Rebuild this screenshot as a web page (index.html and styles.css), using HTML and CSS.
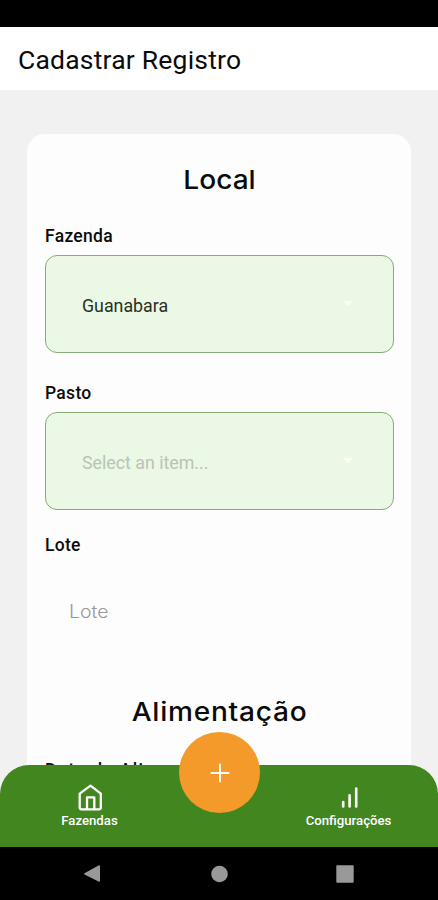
FILE: index.html
```html
<!DOCTYPE html>
<html lang="pt-BR">
<head>
<meta charset="utf-8">
<title>Cadastrar Registro</title>
<link rel="stylesheet" href="styles.css">
</head>
<body>
<div class="status-bar"></div>
<header class="header"><h1 class="header-title">Cadastrar Registro</h1></header>
<main class="content">
  <section class="card">
    <h2 class="section-title">Local</h2>
    <div class="field">
      <div class="label">Fazenda</div>
      <div class="select"><span class="value">Guanabara</span><svg class="caret" width="10" height="5" viewBox="0 0 10 5"><path d="M0 0h10L5 5z"/></svg></div>
    </div>
    <div class="field">
      <div class="label">Pasto</div>
      <div class="select"><span class="placeholder">Select an item...</span><svg class="caret" width="10" height="5" viewBox="0 0 10 5"><path d="M0 0h10L5 5z"/></svg></div>
    </div>
    <div class="field lote">
      <div class="label">Lote</div>
      <div class="input"><span class="input-text">Lote</span></div>
    </div>
    <h2 class="section-title feeding">Alimentação</h2>
    <div class="label date">Data de Alimentação</div>
  </section>
</main>
<nav class="tabs">
  <a class="tab">
    <svg width="28" height="28" viewBox="0 0 28 28" fill="none" stroke="#fff" stroke-width="2.300" stroke-linejoin="round"><path d="M3.700 10.600 14.500 2.600l10.300 8v14q0 1.800-1.800 1.800H5.500q-1.800 0-1.800-1.800z"/><path d="M11 26.200V14.400h7.300v11.800"/></svg>
    <span class="tab-text">Fazendas</span>
  </a>
  <div class="fab"><svg width="20" height="20" viewBox="0 0 20 20" stroke="#fff" stroke-width="2" stroke-linecap="round"><path d="M10 1.500v17M1.500 10h17"/></svg></div>
  <a class="tab">
    <svg width="28" height="28" viewBox="0 0 28 28" stroke="#fff" stroke-width="2.600" stroke-linecap="round"><path d="M8.200 19v4.500M14.600 12.200v11.300M21.200 5.500v18"/></svg>
    <span class="tab-text">Configurações</span>
  </a>
</nav>
<footer class="system-nav">
  <svg width="20" height="20" viewBox="0 0 20 20"><path d="M2.500 9.200 16.500 1.400q1.500-.6 1.500.8v14.600q0 1.500-1.500.8L2.500 10.400q-1-.6 0-1.200z"/></svg>
  <svg width="20" height="20" viewBox="0 0 20 20"><circle cx="10.500" cy="10" r="8.300"/></svg>
  <svg width="20" height="20" viewBox="0 0 20 20"><rect x="1.300" y="1.300" width="17.400" height="17.400" rx="1"/></svg>
</footer>
</body>
</html>
```
FILE: styles.css
```css
* { box-sizing: border-box; }
body { margin: 0; height: 900px; display: flex; flex-direction: column; overflow: hidden; background: #f1f1f1; font-family: Roboto, sans-serif; color: #0b0b0b; }
h1, h2 { margin: 0; }
.status-bar { height: 27px; flex: none; background: #000; }
.header { height: 63px; flex: none; display: flex; align-items: center; padding: 3px 18px 0; background: #fff; }
.header-title { font-size: 26.500px; font-weight: 400; line-height: 32px; letter-spacing: .2px; white-space: nowrap; }
.content { height: 675px; flex: none; overflow: hidden; padding: 44px 27px 0; }
.card { height: 760px; border-radius: 18px; background: #fdfdfd; padding: 28px 17px 0 18px; }
.section-title { height: 34px; line-height: 35px; font-family: Inter, sans-serif; font-size: 26px; font-weight: 500; text-align: center; transform: scaleX(1.08); }
.field { margin-top: 28px; }
.label { height: 22px; line-height: 24px; font-size: 17.500px; font-weight: 500; letter-spacing: .3px; white-space: nowrap; }
.select { height: 98px; margin-top: 9px; border: 1px solid #86ac74; border-radius: 12px; background: #ebf8e5; display: flex; align-items: center; justify-content: space-between; padding: 2px 40px 0 36px; font-size: 17.800px; }
.value { color: #273023; }
.placeholder { color: #b9c4b6; }
.caret { fill: #f8fff6; margin-top: -3px; }
.lote { margin-top: 23px; }
.input { height: 99px; display: flex; align-items: center; padding: 13px 24px 0; font-family: Inter, sans-serif; font-size: 18px; font-weight: 300; color: #999; }
.input-text { transform: scaleX(1.08); transform-origin: left; }
.feeding { margin-top: 40px; letter-spacing: .7px; }
.date { margin-top: 30px; letter-spacing: 1.350px; }
.tabs { height: 82px; flex: none; display: grid; grid-template-columns: 179px 80px 179px; border-radius: 29px 29px 0 0; background: #42861f; }
.tab { display: flex; flex-direction: column; align-items: center; padding-top: 18px; color: #fff; }
.tab-text { font-size: 13.200px; line-height: 18px; margin-top: 1px; font-weight: 500; }
.fab { width: 81px; height: 81px; margin-top: -33px; border-radius: 50%; background: #f39a2b; display: flex; align-items: center; justify-content: center; position: relative; }
.system-nav { height: 53px; flex: none; background: #000; display: flex; align-items: center; justify-content: space-between; padding: 0 83px 0 82px; fill: #999; }
```
